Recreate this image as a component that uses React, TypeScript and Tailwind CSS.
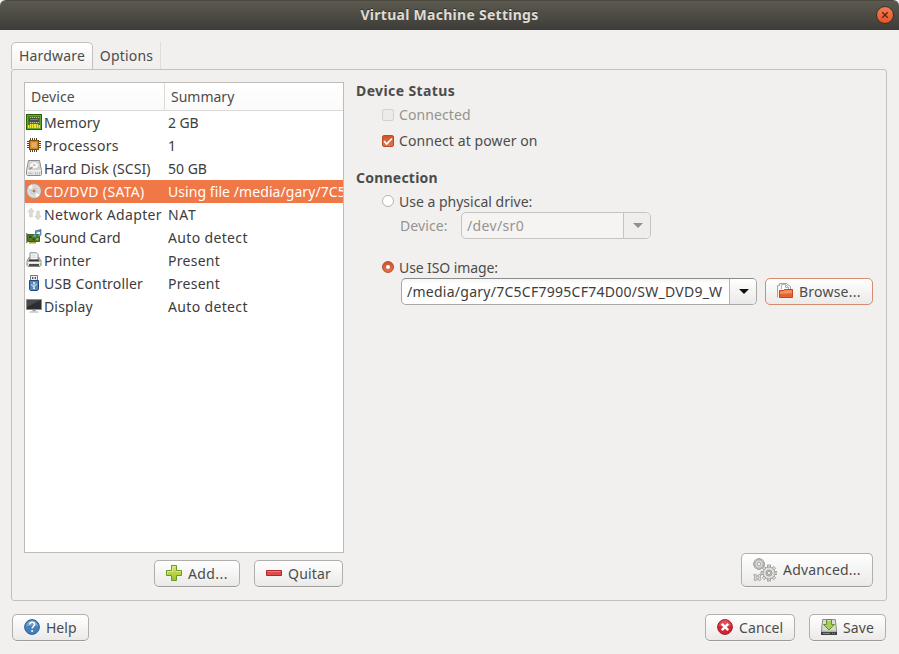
import React from 'react';

const buttonFace =
  'flex items-center gap-[6px] rounded-[5px] border bg-linear-to-b from-white to-[#ebeae9] pl-[11px] whitespace-nowrap';
const buttonBase = `${buttonFace} h-[27px] border-[#b1afac] border-b-[#9d9b98] shadow-[0_1px_0_#f8f8f7] [&>svg]:mb-px`;

function MemoryIcon() {
  return (
    <svg width="16" height="16" viewBox="0 0 16 16" shapeRendering="crispEdges">
      <rect width="16" height="16" fill="#2c6105" />
      <rect x="1" y="1" width="14" height="14" fill="#63a82a" />
      <rect x="2" y="2" width="12" height="12" fill="#47801a" />
      <path d="M4 3h1v6H4zM6 3h1v6H6zM8 3h1v6H8zM10 3h1v6h-1zM12 3h1v6h-1z" fill="#c1c5b8" />
      <rect x="3" y="4" width="10" height="4" fill="#4b4f46" />
      <path d="M4 5h8v1H4z" fill="#7e8278" />
      <path d="M2 11h1v3H2zM4 10h1v4H4zM6 10h1v4H6zM8 10h2v4H8zM11 10h1v4h-1zM13 11h1v3h-1z" fill="#f0e530" />
      <path d="M3 11h1v3H3zM5 10h1v4H5zM7 10h1v4H7zM10 10h1v4h-1zM12 11h1v3h-1z" fill="#b9ae17" />
    </svg>
  );
}

function ProcessorIcon() {
  return (
    <svg width="16" height="16" viewBox="0 0 16 16" shapeRendering="crispEdges">
      <path d="M4 1h1v14H4zM6 1h1v14H6zM8 1h1v14H8zM10 1h1v14h-1zM1 4h14v1H1zM1 6h14v1H1zM1 8h14v1H1zM1 10h14v1H1z" fill="#4f4631" />
      <rect x="3" y="3" width="10" height="10" fill="#854904" />
      <rect x="4" y="4" width="8" height="8" fill="#cf8424" />
      <rect x="5" y="5" width="6" height="6" fill="#dfa14b" />
      <rect x="6" y="6" width="4" height="4" fill="#e5ad5e" />
    </svg>
  );
}

function DiskIcon() {
  return (
    <svg width="16" height="16" viewBox="0 0 16 16">
      <path d="M2.5.5h11l2 10v4.2l-.8.8H1.3l-.8-.8v-4.2z" fill="#e4e4e2" stroke="#8b8b89" />
      <path d="M3.2 1.3h9.6l1.7 8.5h-13z" fill="#cfcfcd" />
      <ellipse cx="8.2" cy="5.3" rx="4.8" ry="3.6" fill="#f5f5f4" stroke="#b5b5b3" strokeWidth=".6" />
      <ellipse cx="8.2" cy="5.1" rx="1.3" ry=".9" fill="#b5b5b3" />
      <path d="M3.5 9.3 6.5 7" stroke="#8a8a88" strokeWidth="1.1" />
      <path d="M1 10.8h14" stroke="#f4f4f3" />
      <path d="M2.5 13.3h4M9.5 12.3v2M11.5 12.3v2M13.5 12.3v2" stroke="#a5a4a1" strokeWidth=".8" />
    </svg>
  );
}

function DiscIcon() {
  return (
    <svg width="16" height="16" viewBox="0 0 16 16">
      <circle cx="8" cy="8" r="7.4" fill="#d9d9d7" stroke="#a08e85" strokeWidth=".8" />
      <path d="M8 8 2.2 4.2A7 7 0 0 1 5.6 1.5zM8 8l5.8 3.8A7 7 0 0 1 10.4 14.5z" fill="#f8f8f7" />
      <circle cx="8" cy="8" r="2.9" fill="#e9e9e7" stroke="#bcbcba" strokeWidth=".7" />
      <circle cx="8" cy="8" r="1.3" fill="#e07a50" stroke="#8d7b72" strokeWidth=".6" />
    </svg>
  );
}

function NetworkIcon() {
  return (
    <svg width="16" height="16" viewBox="0 0 16 16">
      <path d="M5 2 1.7 6H3.6v5h2.8V6h1.9zM10.6 5h2.8v5h1.9L12 14 8.7 10h1.9z" fill="#dcdad5" stroke="#cecbc5" strokeWidth=".5" />
    </svg>
  );
}

function SoundIcon() {
  return (
    <svg width="16" height="16" viewBox="0 0 16 16">
      <path d="M0 4h1.5v10H0z" fill="#8b8f84" />
      <path d="M1.5 5.5h12v7h-12z" fill="#4d7c24" stroke="#3b641b" />
      <path d="M3 13h7v1.5H3z" fill="#b5a02f" />
      <path d="M3 7h2.5v2H3zM6.5 9.5H9v1.8H6.5z" fill="#2f4a1c" />
      <circle cx="11.3" cy="10.3" r="1.1" fill="#9cb681" />
      <path d="M9.7 6.5V2l5-1.2v5" fill="none" stroke="#4a7fa8" strokeWidth="1.3" />
      <path d="M9.5 3.4l5-1.2" stroke="#4a7fa8" />
      <ellipse cx="8.6" cy="6.8" rx="1.7" ry="1.2" fill="#6b9abd" />
      <ellipse cx="13.7" cy="6" rx="1.7" ry="1.2" fill="#6b9abd" />
    </svg>
  );
}

function PrinterIcon() {
  return (
    <svg width="16" height="16" viewBox="0 0 16 16">
      <path d="m1 9 2-3.5h10L15 9v4.5l-1 1H2l-1-1z" fill="#e2e2de" stroke="#7d7d79" strokeWidth=".9" />
      <path d="M4 8V.8h6.5L12 2.3V8z" fill="#fbfbfb" stroke="#7f7f7f" strokeWidth=".9" />
      <path d="M5.3 3.2h4.5M5.3 5.2h5" stroke="#c6c6c6" strokeWidth=".8" />
      <path d="M3 7.5h10l.7 2H2.3z" fill="#3d3d3a" />
      <path d="M1.5 10.5h13" stroke="#f6f6f4" />
      <path d="M3 12h10v2H3z" fill="#4c4c49" />
    </svg>
  );
}

function UsbIcon() {
  return (
    <svg width="16" height="16" viewBox="0 0 16 16">
      <path d="M4.5.5h7v5h-7z" fill="#ececea" stroke="#777" />
      <path d="M6 2h1.3v2H6zM8.7 2H10v2H8.7z" fill="#555" />
      <path d="M3.5 5.5h9v9l-1 1h-7l-1-1z" fill="#5485b9" stroke="#204a87" />
      <path d="M8 13.5V7.5M8 12 5.8 10.5V9M8 11.5l2.2-1.5V8.5" fill="none" stroke="#f1f6fb" strokeWidth=".8" />
      <path d="m6.8 8.5L8 6.5l1.2 2z" fill="#fff" />
      <circle cx="8" cy="13.3" r=".9" fill="#fff" />
    </svg>
  );
}

function DisplayIcon() {
  return (
    <svg width="16" height="16" viewBox="0 0 16 16">
      <path d="M.5 1.5h15v10H.5z" fill="#2c2e2f" stroke="#8b8b88" />
      <path d="M1 2h14L1 9z" fill="#47494b" />
      <path d="M6.5 12h3v1.5h-3z" fill="#999" />
      <path d="M4 13.3h8l.7 1.5H3.3z" fill="#c5c5c1" />
    </svg>
  );
}

const devices = [
  { name: 'Memory', summary: '2 GB', icon: MemoryIcon, nameTracking: 'tracking-[0.15px]', summaryTracking: 'tracking-[-0.1px]' },
  { name: 'Processors', summary: '1', icon: ProcessorIcon, nameTracking: 'tracking-[0.35px]', summaryTracking: '' },
  { name: 'Hard Disk (SCSI)', summary: '50 GB', icon: DiskIcon, nameTracking: 'tracking-[0.1px]', summaryTracking: '' },
  { name: 'CD/DVD (SATA)', summary: 'Using file /media/gary/7C5', icon: DiscIcon, nameTracking: 'tracking-[0.32px]', summaryTracking: 'tracking-[0.07px]', selected: true },
  { name: 'Network Adapter', summary: 'NAT', icon: NetworkIcon, nameTracking: 'tracking-[0.35px]', summaryTracking: 'tracking-[0.7px]' },
  { name: 'Sound Card', summary: 'Auto detect', icon: SoundIcon, nameTracking: '', summaryTracking: 'tracking-[0.35px]' },
  { name: 'Printer', summary: 'Present', icon: PrinterIcon, nameTracking: 'tracking-[0.25px]', summaryTracking: 'tracking-[0.28px]' },
  { name: 'USB Controller', summary: 'Present', icon: UsbIcon, nameTracking: 'tracking-[0.18px]', summaryTracking: 'tracking-[0.28px]' },
  { name: 'Display', summary: 'Auto detect', icon: DisplayIcon, nameTracking: 'tracking-[0.15px]', summaryTracking: 'tracking-[0.35px]' },
];

function AddIcon() {
  return (
    <svg width="16" height="16" viewBox="0 0 16 16">
      <defs>
        <linearGradient id="add" x1="0" y1="0" x2="0" y2="1"><stop stopColor="#d8e86b" /><stop offset="1" stopColor="#a2bd2b" /></linearGradient>
      </defs>
      <path d="M5.5.5h5v5h5v5h-5v5h-5v-5h-5v-5h5z" fill="url(#add)" stroke="#669b26" />
      <path d="M6.5 6.5v-5h3M1.5 9V6.5h5M10.5 6.5h4" fill="none" stroke="#e3ed9b" strokeWidth=".8" />
    </svg>
  );
}

function RemoveIcon() {
  return (
    <svg width="16" height="16" viewBox="0 0 16 16">
      <path d="M.5 5.5h15v5H.5z" fill="#dd4c4c" stroke="#b0272c" />
      <path d="M1.5 6.5h13" stroke="#e87f7f" />
    </svg>
  );
}

function GearsIcon() {
  const teeth = [0, 45, 90, 135, 180, 225, 270, 315];
  return (
    <svg width="24" height="24" viewBox="0 0 24 24">
      <g fill="#dededc" stroke="#949492" strokeWidth=".8">
        {teeth.map((a) => <rect key={a} x="4.7" y=".6" width="2.6" height="3" transform={`rotate(${a} 6 6)`} />)}
        <circle cx="6" cy="6" r="4.2" />
        <circle cx="6" cy="6" r="1.8" fill="#f4f4f3" />
        {teeth.map((a) => <rect key={a} x="14.6" y="7" width="2.8" height="3.5" transform={`rotate(${a} 16 15)`} />)}
        <circle cx="16" cy="15" r="6" />
        <circle cx="16" cy="15" r="3" fill="#c9c9c7" />
        <circle cx="16" cy="15" r="1.6" fill="#f4f4f3" />
        <path d="m.8 16.8 1.6-.5 1.2 1h1.6l1.3-1 1.4.7-.6 1.6v1.7l.6 1.5-1.2.9-1.5-.9H3.6l-1.5.9-1.2-.9.7-1.5v-1.9z" />
        <circle cx="4.4" cy="19.5" r="1.2" fill="#f4f4f3" />
      </g>
    </svg>
  );
}

function BrowseIcon() {
  return (
    <svg width="16" height="16" viewBox="0 0 16 16">
      <path d="M.5 14.5V2.5h2v-2h7l4 3v7" fill="#f5f5f3" stroke="#a5a5a3" />
      <path d="M4.5 6V1.5h4l3 3V7M8.5 1.5v3h3" fill="#fff" stroke="#a5a5a3" strokeWidth=".8" />
      <path d="M2.5 14.5v-7h4l1-1h8v8z" fill="#e8602a" stroke="#c8461a" />
      <path d="M3.2 8.3h3.6l1-1h7v3L3.2 11z" fill="#f09367" />
    </svg>
  );
}

function HelpIcon() {
  return (
    <svg width="16" height="16" viewBox="0 0 16 16">
      <circle cx="8" cy="8" r="7.4" fill="#4480b8" stroke="#29659b" />
      <path d="M2 7.5a6 6 0 0 1 12 0c-3-1.3-8-1.3-12 0z" fill="#72a0ca" />
      <path d="M5.6 5.6c0-3.1 5-2.9 5-.1 0 1.8-2.5 1.9-2.5 4.1" fill="none" stroke="#fff" strokeWidth="1.5" />
      <circle cx="8.1" cy="12" r="1" fill="#fff" />
    </svg>
  );
}

function CancelIcon() {
  return (
    <svg width="16" height="16" viewBox="0 0 16 16">
      <circle cx="8" cy="8" r="7.4" fill="#d02531" stroke="#a91a24" />
      <path d="M2 7a6 6 0 0 1 12 0c-3 1-8 1-12 0z" fill="#df5059" />
      <path d="m4.8 4.8 6.4 6.4M11.2 4.8l-6.4 6.4" stroke="#fff" strokeWidth="2.5" />
    </svg>
  );
}

function SaveIcon() {
  return (
    <svg width="16" height="16" viewBox="0 0 16 16">
      <path d="M1.7.5h12.6l1.2 10.5v4.5H.5V11z" fill="#d9d9d6" stroke="#8d8d89" />
      <path d="M1 11.5h14V13H1z" fill="#b4b5b1" />
      <path d="M0 13h16v3H0z" fill="#3f413d" />
      <path d="M2 14.4h7M11 14.4h1M13 14.4h1" stroke="#8f928b" />
      <path d="M5.5.5h5v5h3L8 11 2.5 5.5h3z" fill="#a9cc5b" stroke="#61912a" />
      <path d="M6.5 1.5h3" stroke="#d6e9ad" />
    </svg>
  );
}

export default function App() {
  return (
    <div className="flex h-[654px] w-[899px] flex-col overflow-hidden bg-[#f1f0ee] font-['Noto_Sans','Open_Sans',sans-serif] text-[14px] leading-[20px] text-[#4c4c4c]">
      <header className="grid h-[30px] shrink-0 grid-cols-[30px_1fr_30px] items-center rounded-t-[6px] border-t border-[#4b493f] bg-linear-to-b from-[#5c5a4f] to-[#3d3c38]">
        <span />
        <h1 className="-mt-[2px] text-center text-[14px] font-bold tracking-[0.27px] text-[#dfdbd2] [text-shadow:0_-1px_0_#302f2b]">Virtual Machine Settings</h1>
        <button aria-label="Close" className="-mt-px ml-[7px] flex size-[18px] items-center justify-center rounded-full border border-[#34332e] bg-linear-to-b from-[#f47b55] to-[#e95420]">
          <svg width="8" height="8" viewBox="0 0 8 8"><path d="m1.2 1.2 5.6 5.6M6.8 1.2 1.2 6.8" stroke="#5b2614" strokeWidth="1.3" /></svg>
        </button>
      </header>

      <nav className="ml-[11px] mt-[12px] flex h-[27px] shrink-0 tracking-[0.2px]">
        <button className="h-[27px] w-[82px] rounded-t-[5px] border border-b-0 border-[#c3c1be] bg-linear-to-b from-white to-[#f3f2f1] text-center">Hardware</button>
        <button className="w-[68px] border-r border-[#dfddda] text-center">Options</button>
      </nav>

      <main className="mx-[11px] flex h-[532px] w-[876px] shrink-0 rounded-[3px] border border-[#c3c1be]">
        <section className="ml-[12px] mt-[12px] flex w-[320px] flex-col">
          <div className="h-[471px] w-[320px] overflow-hidden border border-[#bebcb9] bg-white">
            <div className="flex h-[28px] border-b border-[#dcdad7] bg-linear-to-b from-white to-[#fafafa]">
              <div className="w-[140px] border-r border-[#dcdad7] pl-[6px] pt-[4px] tracking-[0.1px]">Device</div>
              <div className="pl-[6px] pt-[4px]">Summary</div>
            </div>
            {devices.map(({ name, summary, icon: Icon, nameTracking, summaryTracking, selected }) => (
              <div key={name} className={`flex h-[23px] items-center whitespace-nowrap ${selected ? 'bg-[#f07746] text-white' : 'text-[#3c3c3c]'}`}>
                <span className="-mt-px ml-px mr-[2px] w-[16px] shrink-0">
                  <Icon />
                </span>
                <span className={`w-[124px] shrink-0 ${nameTracking}`}>{name}</span>
                <span className={summaryTracking}>{summary}</span>
              </div>
            ))}
          </div>
          <div className="mt-[7px] flex justify-end gap-[14px] pr-px">
            <button className={`${buttonBase} w-[86px] tracking-[0.4px]`}><AddIcon />Add...</button>
            <button className={`${buttonBase} w-[89px] tracking-[0.2px]`}><RemoveIcon />Quitar</button>
          </div>
        </section>

        <section className="ml-[12px] mt-[11px] flex w-[517px] flex-col">
          <h2 className="h-[20px] font-bold tracking-[0.38px]">Device Status</h2>
          <label className="mt-[4px] flex h-[20px] items-center pl-[26px] tracking-[0.1px] text-[#959390]">
            <span className="mr-[5px] size-[12px] rounded-[2px] border border-[#d3d1ce] bg-[#ecebe9]" />Connected
          </label>
          <label className="mt-[6px] flex h-[20px] items-center pl-[26px] tracking-[0.1px]">
            <span className="mr-[5px] flex size-[12px] items-center justify-center rounded-[2px] border border-[#b94c27] bg-linear-to-b from-[#d35327] to-[#dd7650]">
              <svg width="10" height="9" viewBox="0 0 10 9"><path d="m1 4 2.7 3L9 1.5" fill="none" stroke="#fff" strokeWidth="1.8" /></svg>
            </span>
            Connect at power on
          </label>
          <h2 className="mt-[17px] h-[20px] font-bold tracking-[0.22px]">Connection</h2>
          <label className="mt-[4px] flex h-[20px] items-center pl-[26px]">
            <span className="-mt-[2px] mr-[5px] size-[12px] rounded-full border border-[#b5b3b0] bg-white" />Use a physical drive:
          </label>
          <div className="flex h-[27px] text-[#959390]">
            <span className="ml-[44px] w-[61px] pt-[4px] tracking-[0.1px]">Device:</span>
            <div className="flex w-[190px] rounded-[5px] border border-[#c6c4c1] bg-[#f5f4f3]">
              <span className="w-[162px] border-r border-[#c6c4c1] pl-[5px] pt-[3px] tracking-[0.35px]">/dev/sr0</span>
              <span className="flex flex-1 items-center justify-center rounded-r-[4px] bg-[#efeeec] pl-px">
                <svg width="10" height="5" viewBox="0 0 10 5"><path d="M0 0h10L5 5z" fill="#92908b" /></svg>
              </span>
            </div>
          </div>
          <label className="mt-[19px] flex h-[20px] items-center pl-[26px] tracking-[-0.1px]">
            <span className="-mt-[2px] mr-[5px] flex size-[12px] items-center justify-center rounded-full border border-[#b94c27] bg-linear-to-b from-[#d0502a] to-[#dd7650]"><i className="size-[4px] rounded-full bg-white" /></span>Use ISO image:
          </label>
          <div className="ml-[45px] flex h-[27px] text-[#3c3c3c]">
            <div className="flex w-[356px] rounded-[5px] border border-[#aaa8a5] border-t-[#8e8c89] bg-linear-to-b from-[#f5f5f5] to-white to-20%">
              <span className="w-[328px] overflow-hidden whitespace-nowrap border-r border-[#b6b4b1] pl-[5px] pt-[3px] tracking-[0.26px]">/media/gary/7C5CF7995CF74D00/SW_DVD9_W</span>
              <span className="flex flex-1 items-center justify-center rounded-r-[4px] bg-linear-to-b from-white to-[#ebeae9] pl-px">
                <svg width="10" height="5" viewBox="0 0 10 5"><path d="M0 0h10L5 5z" fill="#111" /></svg>
              </span>
            </div>
            <button className={`${buttonFace} ml-[8px] w-[108px] border-[#d78b70] tracking-[0.22px] text-[#4c4c4c] [&>svg]:mb-px`}><BrowseIcon />Browse...</button>
          </div>
          <button className={`${buttonFace} mb-[13px] mt-auto h-[34px] w-[132px] self-end border-[#b1afac] border-b-[#9d9b98] tracking-[0.18px] shadow-[0_1px_0_#f8f8f7]`}><GearsIcon />Advanced...</button>
        </section>
      </main>

      <footer className="mt-[13px] flex px-[12px]">
        <button className={`${buttonBase} w-[77px]`}><HelpIcon />Help</button>
        <div className="ml-auto mr-px flex gap-[14px]">
          <button className={`${buttonBase} w-[90px] tracking-[0.1px]`}><CancelIcon />Cancel</button>
          <button className={`${buttonBase} w-[77px] tracking-[0.15px]`}><SaveIcon />Save</button>
        </div>
      </footer>
    </div>
  );
}
